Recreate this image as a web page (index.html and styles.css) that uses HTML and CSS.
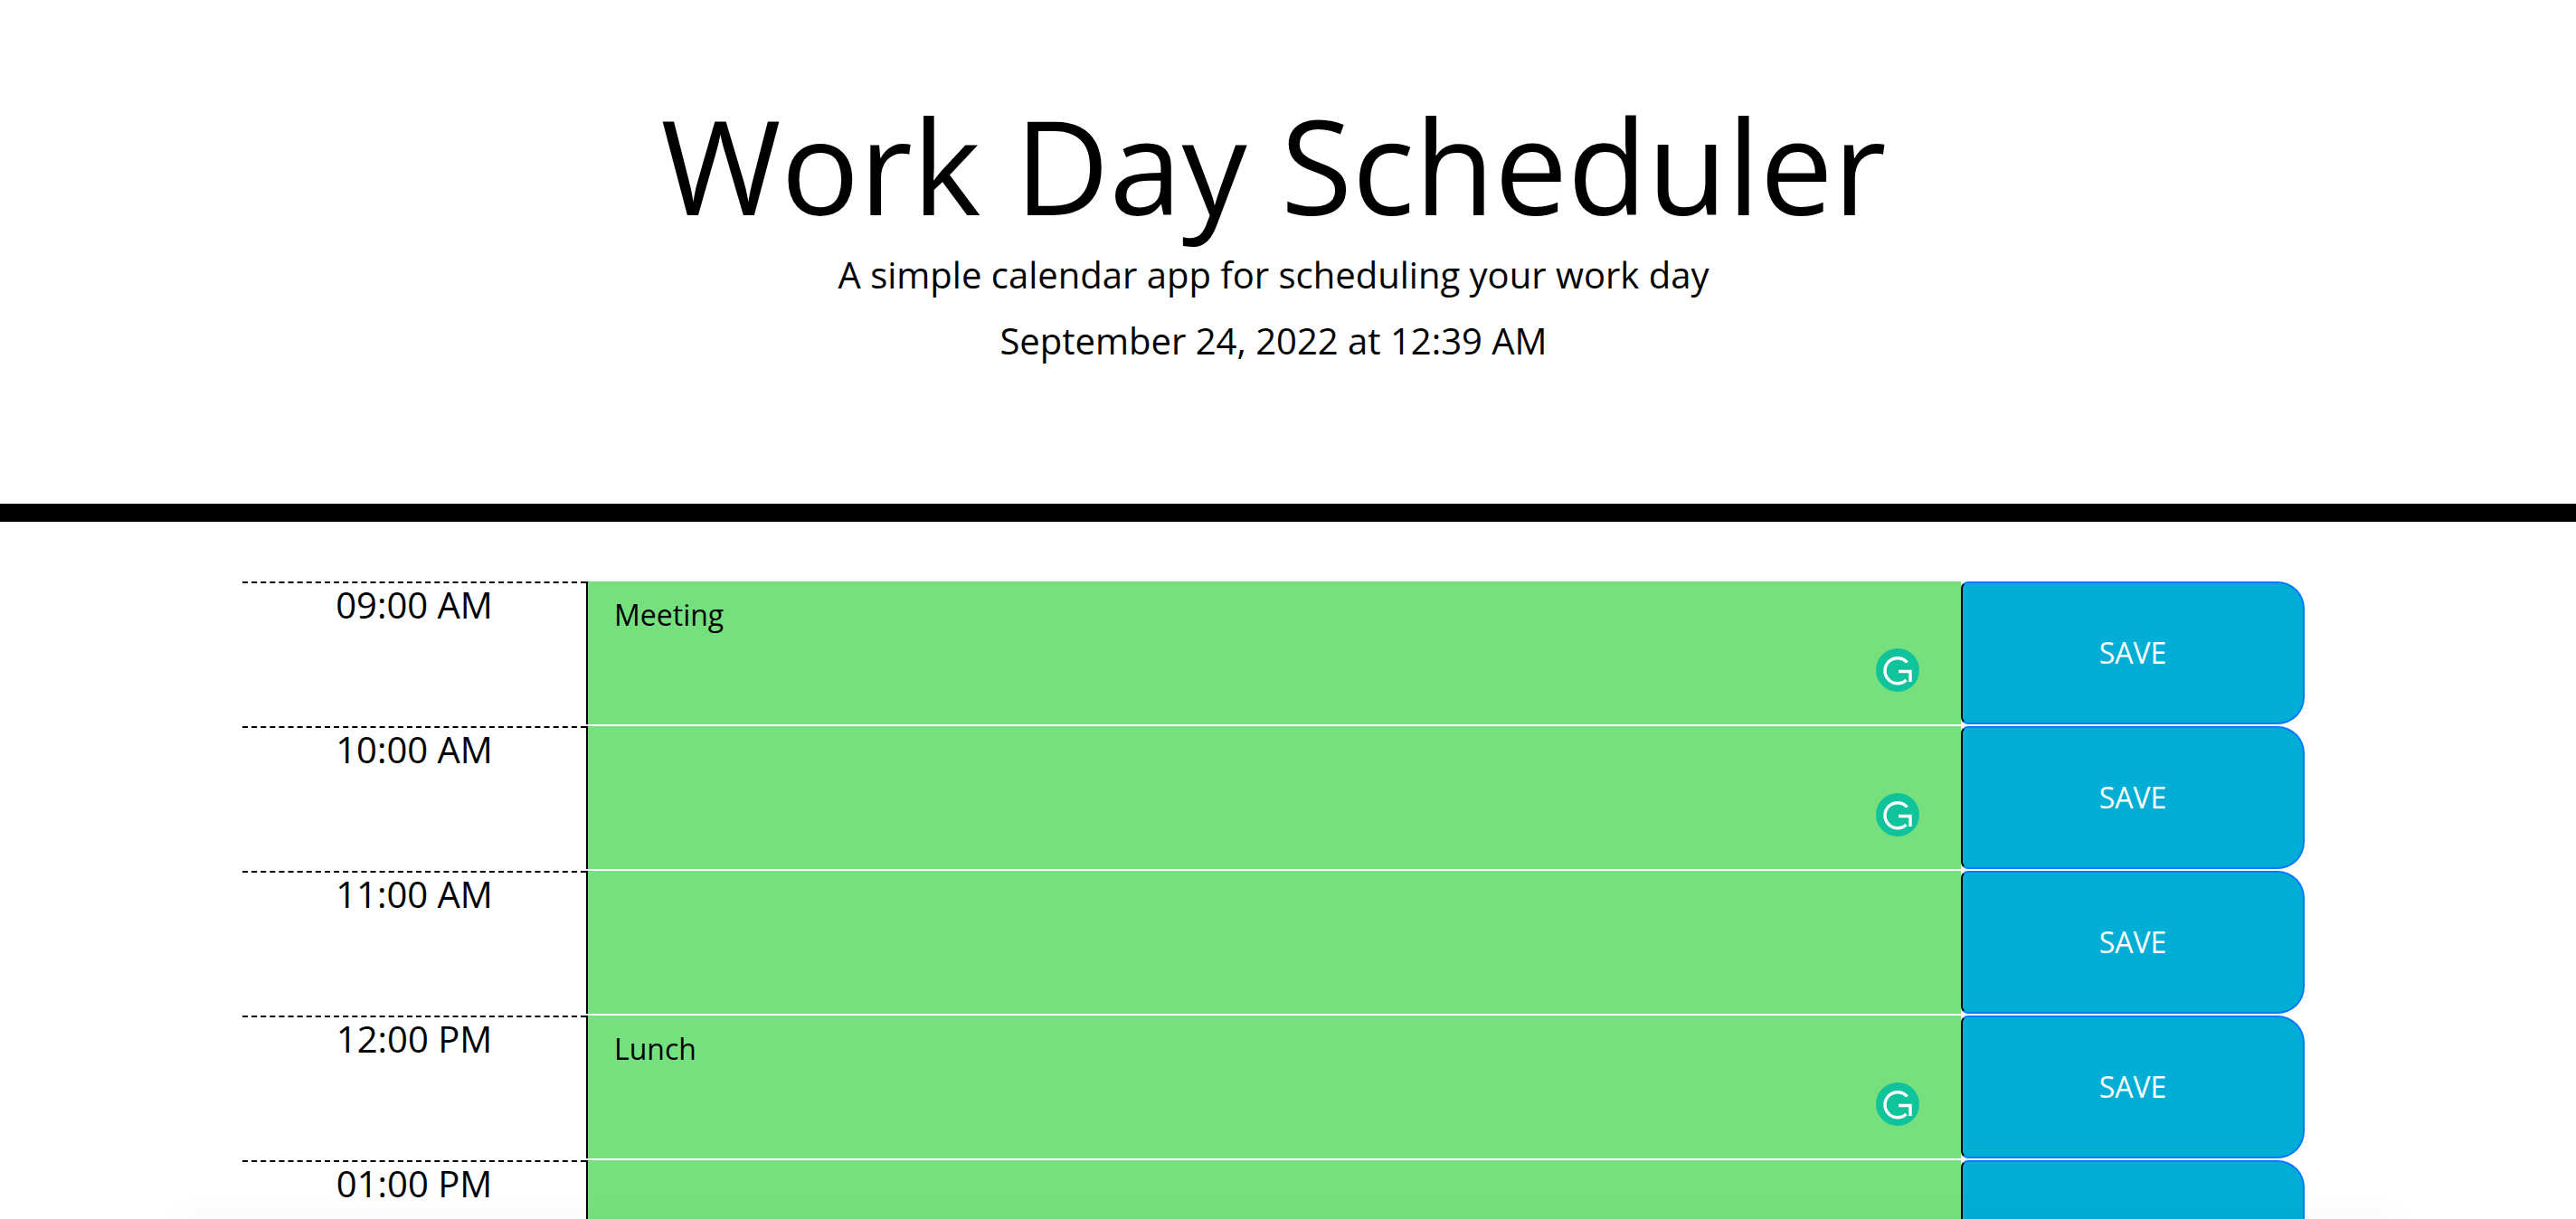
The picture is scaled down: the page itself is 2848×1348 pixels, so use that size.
FILE: index.html
```html
<!DOCTYPE html>
<html lang="en">
<head>
    <meta charset="UTF-8">
    <meta name="viewport" content="width=device-width, initial-scale=1.0">
    <title>Work Day Scheduler</title>
    <link rel="stylesheet" href="styles.css">
</head>
<body>
    <!-- Header -->
    <header class="jumbotron">
        <h1>Work Day Scheduler</h1>
        <p class="lead">A simple calendar app for scheduling your work day</p>
        <p class="lead current-day">September 24, 2022 at 12:39 AM</p>
    </header>

    <!-- Time blocks -->
    <main class="container">
        <div class="time-block">
            <div class="hour">09:00 AM</div>
            <div class="description">
                <p class="note">Meeting</p>
                <svg class="grammarly" viewBox="0 0 48 48"><circle cx="24" cy="24" r="24" fill="#10c39a"/><path d="M34.5 15.5A14 14 0 1 0 33.5 35M25 25.5H38V37" fill="none" stroke="#fff" stroke-width="3.4"/></svg>
            </div>
            <button class="saveBtn">SAVE</button>
        </div>
        <div class="time-block">
            <div class="hour">10:00 AM</div>
            <div class="description">
                <svg class="grammarly" viewBox="0 0 48 48"><circle cx="24" cy="24" r="24" fill="#10c39a"/><path d="M34.5 15.5A14 14 0 1 0 33.5 35M25 25.5H38V37" fill="none" stroke="#fff" stroke-width="3.4"/></svg>
            </div>
            <button class="saveBtn">SAVE</button>
        </div>
        <div class="time-block">
            <div class="hour">11:00 AM</div>
            <div class="description"></div>
            <button class="saveBtn">SAVE</button>
        </div>
        <div class="time-block">
            <div class="hour">12:00 PM</div>
            <div class="description">
                <p class="note">Lunch</p>
                <svg class="grammarly" viewBox="0 0 48 48"><circle cx="24" cy="24" r="24" fill="#10c39a"/><path d="M34.5 15.5A14 14 0 1 0 33.5 35M25 25.5H38V37" fill="none" stroke="#fff" stroke-width="3.4"/></svg>
            </div>
            <button class="saveBtn">SAVE</button>
        </div>
        <div class="time-block">
            <div class="hour">01:00 PM</div>
            <div class="description"></div>
            <button class="saveBtn" aria-label="Save"></button>
        </div>
    </main>

    <!-- Soft shadow along the bottom of the window -->
    <div class="bottom-shadow"></div>
</body>
</html>
```

FILE: styles.css
```css
html, body {
    height: 100%;
    overflow: hidden;
}
body {
    font-family: 'Open Sans', sans-serif;
    background-color: #fff;
    color: #000;
    margin: 0;
}
.jumbotron {
    height: 557px;
    padding-right: 32px;
    border-bottom: 20px solid #000;
    text-align: center;
    overflow: hidden;
}
.jumbotron h1 {
    font-size: 144px;
    font-weight: 400;
    line-height: 172px;
    margin: 96px 0 6px;
}
.lead {
    font-size: 40px;
    line-height: 60px;
    margin: 0 0 13px;
}
.container {
    padding: 66px 0 0 268px;
}
.time-block {
    display: grid;
    grid-template-columns: 380px 1520px 380px;
    height: 158px;
    margin-bottom: 2px;
}
.hour {
    border-top: 2px dashed #000;
    font-size: 40px;
    line-height: 48px;
    text-align: center;
}
.description {
    background: #76e07e;
    border-left: 2px solid #000;
    padding: 21px 29px 0;
    position: relative;
}
.note {
    font-size: 32px;
    line-height: 32px;
    margin: 0;
}
.grammarly {
    position: absolute;
    right: 46px;
    bottom: 36px;
    width: 48px;
    height: 48px;
}
.saveBtn {
    background: #02aed6;
    border: 2px solid #007bff;
    border-left-color: #000;
    border-radius: 8px 30px 30px 8px;
    color: #fff;
    font-family: inherit;
    font-size: 32px;
    padding: 0 0 2px;
}
.bottom-shadow {
    position: fixed;
    left: 200px;
    right: 200px;
    bottom: -30px;
    height: 30px;
    box-shadow: 0 0 40px rgba(0, 0, 0, 0.04);
    pointer-events: none;
}
```
